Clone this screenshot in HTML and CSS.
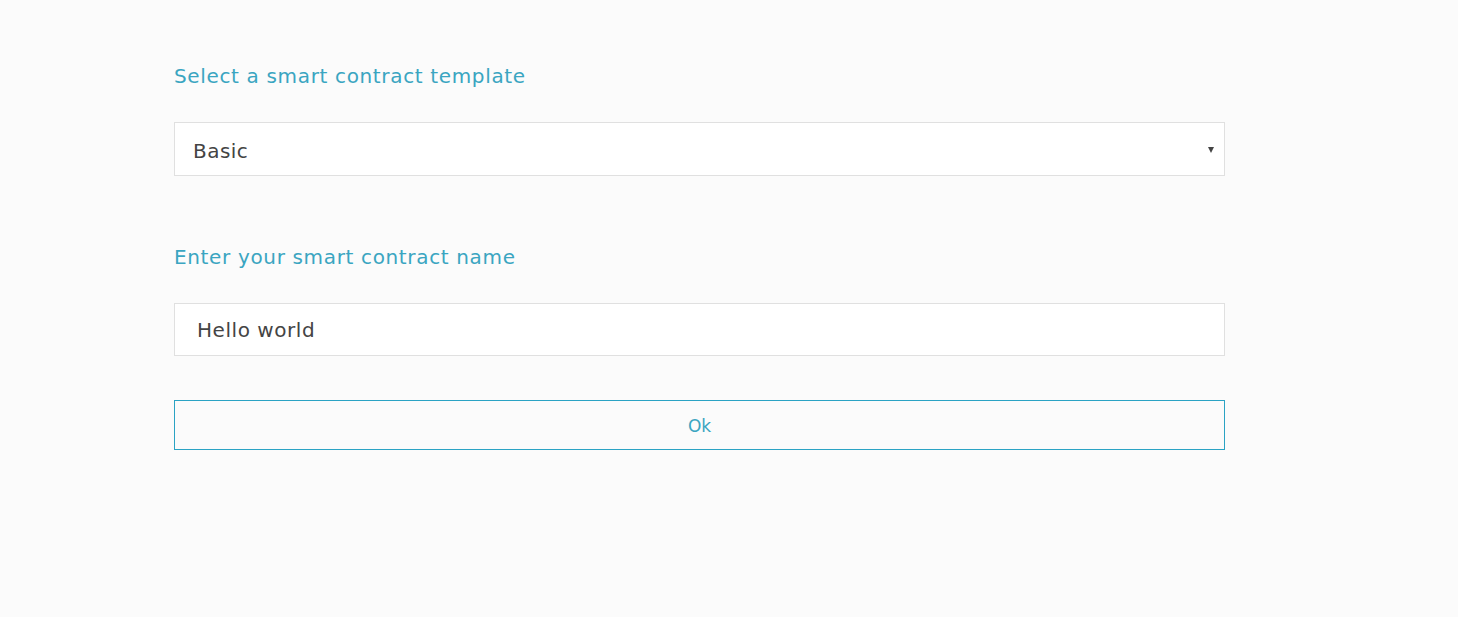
FILE: index.html
```html
<!DOCTYPE html>
<html>
<head>
<meta charset="utf-8">
<link rel="stylesheet" href="styles.css">
</head>
<body>
<div class="form">
  <label class="label" for="tpl">Select a smart contract template</label>
  <div class="select-wrap">
    <select id="tpl" class="select">
      <option>Basic</option>
    </select>
    <span class="arrow"></span>
  </div>
  <label class="label label-second" for="name">Enter your smart contract name</label>
  <input id="name" class="input" type="text" value="Hello world">
  <button class="btn">Ok</button>
</div>
</body>
</html>
```

FILE: styles.css
```css
html, body {
  margin: 0;
  padding: 0;
  background: #fbfbfb;
  font-family: "DejaVu Sans", Verdana, sans-serif;
}
.form {
  display: flex;
  flex-direction: column;
  width: 1051px;
  margin-left: 174px;
  padding-top: 62px;
}
.label {
  display: block;
  font-size: 20px;
  line-height: 28px;
  letter-spacing: 0.65px;
  color: #3aa5c1;
  margin-bottom: 32px;
}
.label-second {
  margin-top: 67px;
}
.select-wrap {
  position: relative;
  height: 54px;
}
.select {
  appearance: none;
  -webkit-appearance: none;
  box-sizing: border-box;
  width: 100%;
  height: 54px;
  margin: 0;
  padding: 4px 0 0 18px;
  border: 1px solid #e0e0e0;
  border-radius: 0;
  background: #fff;
  font-family: "DejaVu Sans", Verdana, sans-serif;
  font-size: 20px;
  letter-spacing: 0.45px;
  color: #444;
  outline: none;
}
.arrow {
  position: absolute;
  right: 11px;
  top: 25px;
  width: 0;
  height: 0;
  border-left: 3.5px solid transparent;
  border-right: 3.5px solid transparent;
  border-top: 6px solid #444;
}
.input {
  box-sizing: border-box;
  width: 100%;
  height: 53px;
  margin: 0;
  padding: 0 0 0 22px;
  border: 1px solid #e0e0e0;
  border-radius: 0;
  background: #fff;
  font-family: "DejaVu Sans", Verdana, sans-serif;
  font-size: 20px;
  letter-spacing: 0.55px;
  color: #444;
  outline: none;
}
.btn {
  box-sizing: border-box;
  width: 100%;
  height: 50px;
  margin-top: 44px;
  border: 1px solid #2ba3c4;
  border-radius: 0;
  background: transparent;
  font-family: "DejaVu Sans", Verdana, sans-serif;
  font-size: 17px;
  color: #3aa5c1;
  padding: 2px 0 0 0;
}
```
